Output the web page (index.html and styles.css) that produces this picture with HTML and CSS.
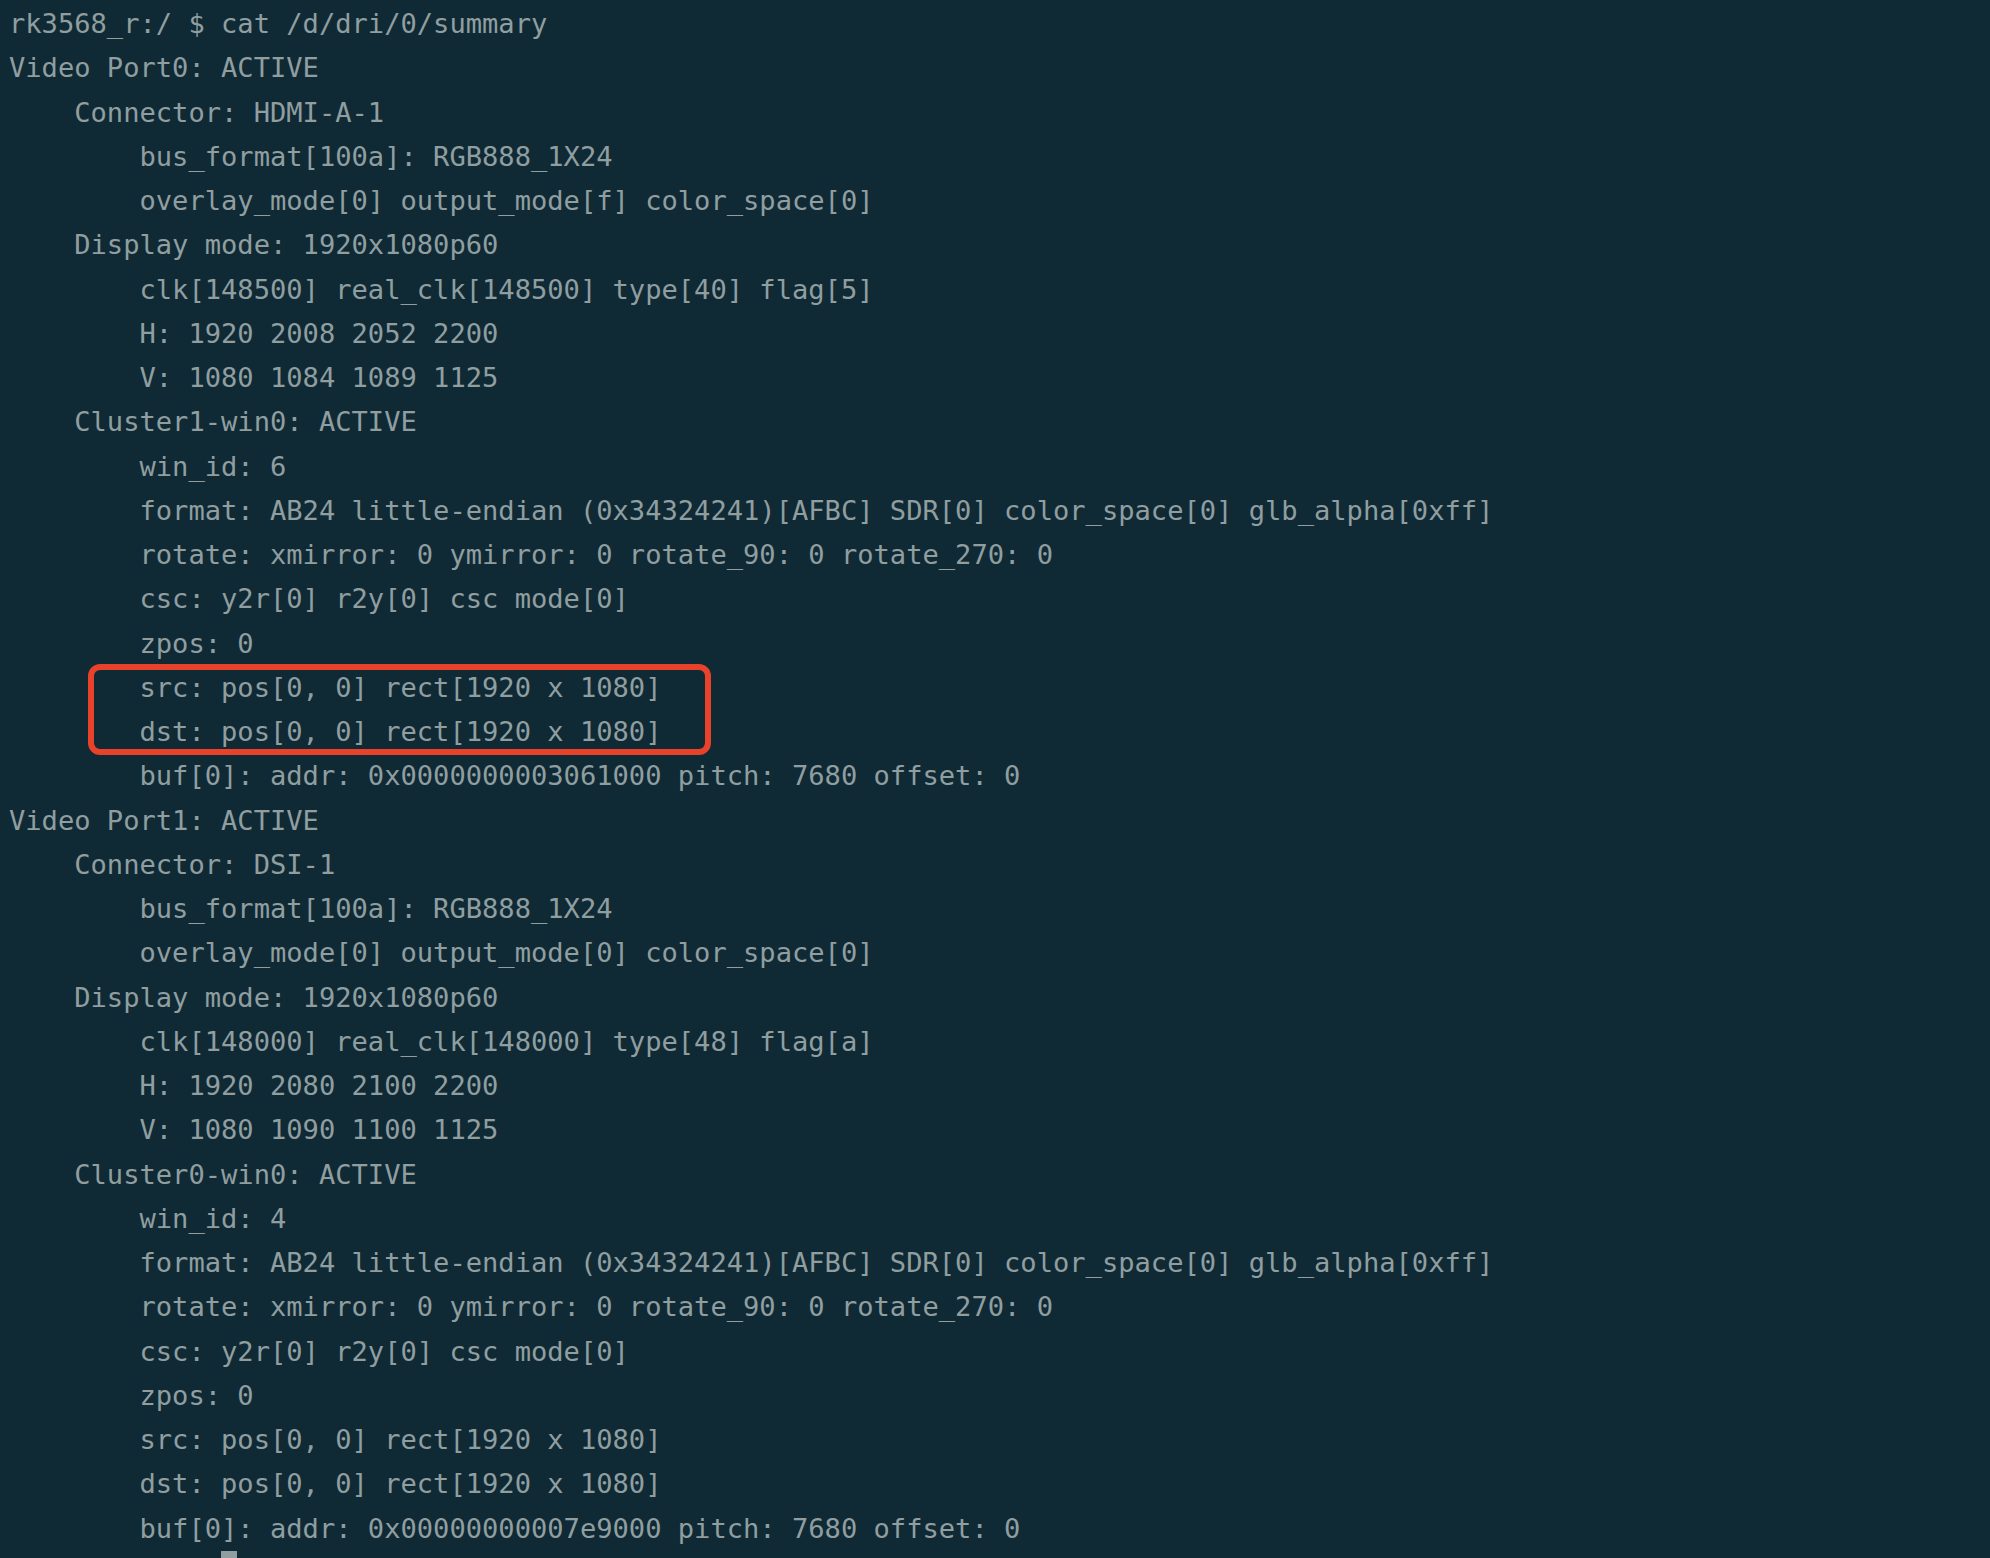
FILE: index.html
```html
<!DOCTYPE html>
<html lang="en">
<head>
<meta charset="utf-8">
<title>summary</title>
<link rel="stylesheet" href="styles.css">
</head>
<body>
<pre class="term"><span class="line">rk3568_r:/ $ cat /d/dri/0/summary</span>
<span class="line">Video Port0: ACTIVE</span>
<span class="line">    Connector: HDMI-A-1</span>
<span class="line">        bus_format[100a]: RGB888_1X24</span>
<span class="line">        overlay_mode[0] output_mode[f] color_space[0]</span>
<span class="line">    Display mode: 1920x1080p60</span>
<span class="line">        clk[148500] real_clk[148500] type[40] flag[5]</span>
<span class="line">        H: 1920 2008 2052 2200</span>
<span class="line">        V: 1080 1084 1089 1125</span>
<span class="line">    Cluster1-win0: ACTIVE</span>
<span class="line">        win_id: 6</span>
<span class="line">        format: AB24 little-endian (0x34324241)[AFBC] SDR[0] color_space[0] glb_alpha[0xff]</span>
<span class="line">        rotate: xmirror: 0 ymirror: 0 rotate_90: 0 rotate_270: 0</span>
<span class="line">        csc: y2r[0] r2y[0] csc mode[0]</span>
<span class="line">        zpos: 0</span>
<span class="hl"><span class="line">        src: pos[0, 0] rect[1920 x 1080]</span>
<span class="line">        dst: pos[0, 0] rect[1920 x 1080]</span></span>
<span class="line">        buf[0]: addr: 0x0000000003061000 pitch: 7680 offset: 0</span>
<span class="line">Video Port1: ACTIVE</span>
<span class="line">    Connector: DSI-1</span>
<span class="line">        bus_format[100a]: RGB888_1X24</span>
<span class="line">        overlay_mode[0] output_mode[0] color_space[0]</span>
<span class="line">    Display mode: 1920x1080p60</span>
<span class="line">        clk[148000] real_clk[148000] type[48] flag[a]</span>
<span class="line">        H: 1920 2080 2100 2200</span>
<span class="line">        V: 1080 1090 1100 1125</span>
<span class="line">    Cluster0-win0: ACTIVE</span>
<span class="line">        win_id: 4</span>
<span class="line">        format: AB24 little-endian (0x34324241)[AFBC] SDR[0] color_space[0] glb_alpha[0xff]</span>
<span class="line">        rotate: xmirror: 0 ymirror: 0 rotate_90: 0 rotate_270: 0</span>
<span class="line">        csc: y2r[0] r2y[0] csc mode[0]</span>
<span class="line">        zpos: 0</span>
<span class="line">        src: pos[0, 0] rect[1920 x 1080]</span>
<span class="line">        dst: pos[0, 0] rect[1920 x 1080]</span>
<span class="line">        buf[0]: addr: 0x00000000007e9000 pitch: 7680 offset: 0</span>
<span class="line">             <span class="cursor"> </span></span></pre>
</body>
</html>
```
FILE: styles.css
```css
html, body {
  margin: 0;
  padding: 0;
  background: #0f2a35;
  height: 100%;
  overflow: hidden;
}

.term {
  margin: 0;
  padding: 2px 0 0 9px;
  font-family: "DejaVu Sans Mono", "Liberation Mono", monospace;
  font-size: 27.1px;
  line-height: 44.25px;
  color: #909ea0;
  white-space: normal;
}

.line {
  display: block;
  white-space: pre;
  height: 44.25px;
}

.hl {
  display: block;
  position: relative;
}

.hl::before {
  content: "";
  position: absolute;
  left: 79px;
  top: -2px;
  width: 623px;
  bottom: -1px;
  box-sizing: border-box;
  border: 6px solid #e8422b;
  border-radius: 12px;
}

.cursor {
  display: inline-block;
  width: 16px;
  height: 44px;
  vertical-align: top;
  position: relative;
}

.cursor::after {
  content: "";
  position: absolute;
  left: 0;
  right: 0;
  top: 0;
  height: 30px;
  background: #909ea0;
}
```
